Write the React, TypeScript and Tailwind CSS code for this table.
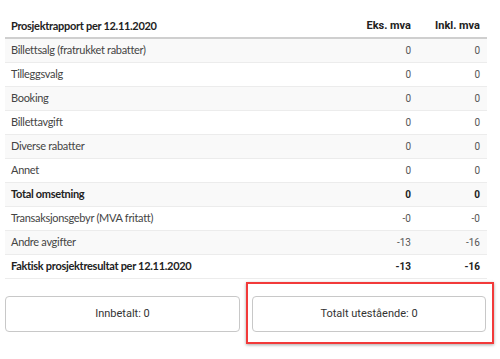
type Row = { label: string; eks: string; inkl: string; bold?: boolean };

const rows: Row[] = [
  { label: "Billettsalg (fratrukket rabatter)", eks: "0", inkl: "0" },
  { label: "Tilleggsvalg", eks: "0", inkl: "0" },
  { label: "Booking", eks: "0", inkl: "0" },
  { label: "Billettavgift", eks: "0", inkl: "0" },
  { label: "Diverse rabatter", eks: "0", inkl: "0" },
  { label: "Annet", eks: "0", inkl: "0" },
  { label: "Total omsetning", eks: "0", inkl: "0", bold: true },
  { label: "Transaksjonsgebyr (MVA fritatt)", eks: "-0", inkl: "-0" },
  { label: "Andre avgifter", eks: "-13", inkl: "-16" },
  { label: "Faktisk prosjektresultat per 12.11.2020", eks: "-13", inkl: "-16", bold: true },
];

const labelFont = "[font-family:Lato,'Noto_Sans',sans-serif] text-[11px] tracking-[-0.3px]";
const numFont = "[font-family:Roboto,'Liberation_Sans',sans-serif]";

export default function App() {
  return (
    <div className="w-[500px] h-[359px] bg-white pt-[17px] overflow-hidden">
      <div className="ml-[5px] w-[482px]">
        <div className="flex items-center h-[22px] border-b-2 border-[#cfcfcf] pb-[2px]">
          <div className={`flex-1 pl-[6px] font-bold text-[#222] ${labelFont}`}>
            Prosjektrapport per 12.11.2020
          </div>
          <div className={`w-[69px] pr-[7px] text-right text-[11px] font-bold text-[#222] ${numFont}`}>Eks. mva</div>
          <div className={`w-[69px] pr-[7px] text-right text-[11px] font-bold text-[#222] ${numFont}`}>Inkl. mva</div>
        </div>
        {rows.map((r, i) => (
          <div
            key={r.label}
            className={`flex items-center h-[24px] border-b border-[#ececec] ${i % 2 === 0 ? "bg-[#f9f9f9]" : "bg-white"}`}
          >
            <div className={`flex-1 pl-[6px] ${labelFont} ${r.bold ? "font-bold text-[#222]" : "text-[#444]"}`}>
              {r.label}
            </div>
            <div className={`w-[69px] pr-[7px] text-right text-[10px] ${numFont} ${r.bold ? "font-bold text-[#222]" : "text-[#555]"}`}>
              {r.eks}
            </div>
            <div className={`w-[69px] pr-[7px] text-right text-[10px] ${numFont} ${r.bold ? "font-bold text-[#222]" : "text-[#555]"}`}>
              {r.inkl}
            </div>
          </div>
        ))}
      </div>

      <div className="flex gap-[12px] pl-[5px] mt-[17px]">
        <button className={`w-[235px] h-[36px] rounded-[4px] border border-[#c8c8c8] bg-white text-[11px] text-[#333] ${numFont}`}>
          Innbetalt: 0
        </button>
        <div className="relative">
          <button className={`w-[234px] h-[36px] rounded-[4px] border border-[#c8c8c8] bg-white text-[11px] text-[#333] ${numFont}`}>
            Totalt utestående: 0
          </button>
          {/* highlight frame around the outstanding total */}
          <div className="absolute -left-[6px] -top-[14px] -right-[8px] -bottom-[12px] border-2 border-[#f23a3a] shadow-[0_1px_3px_rgba(0,0,0,0.35)] pointer-events-none" />
        </div>
      </div>
    </div>
  );
}
